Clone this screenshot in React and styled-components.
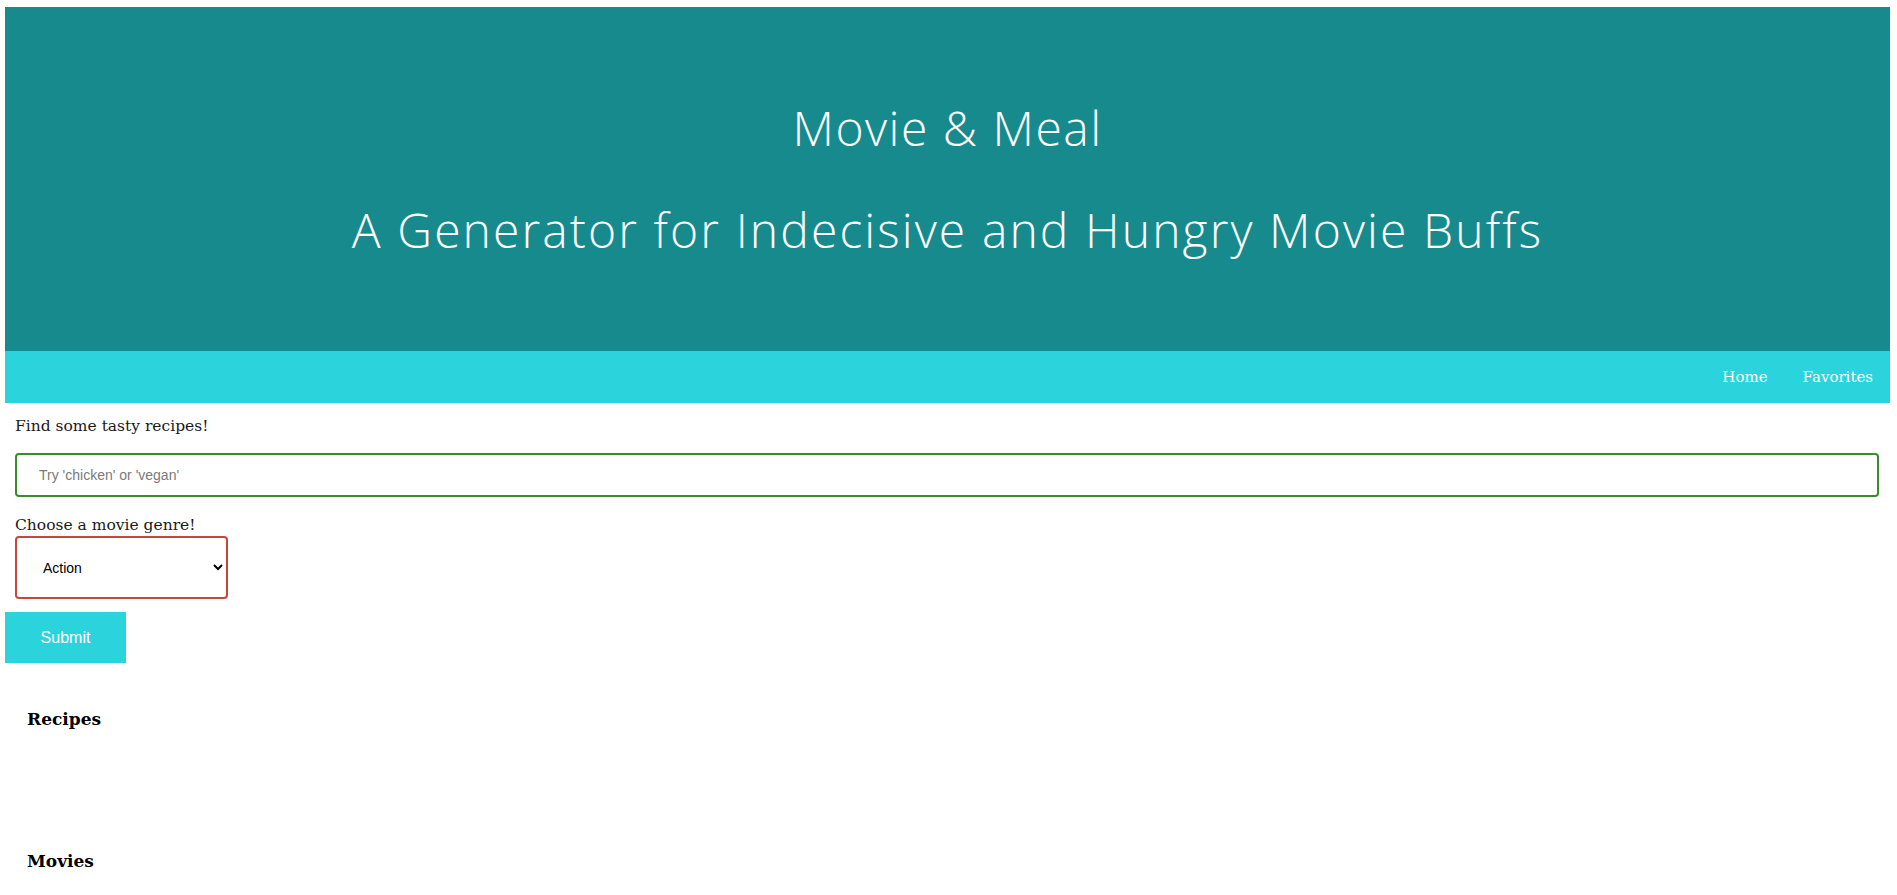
import React from 'react';
import styled, { createGlobalStyle } from 'styled-components';

const GlobalStyle = createGlobalStyle`
  body {
    margin: 0;
    background: #ffffff;
    font-family: 'DejaVu Serif', 'Liberation Serif', serif;
  }
`;

const Page = styled.div`
  padding: 7px 7px 0 5px;
`;

const Hero = styled.header`
  height: 344px;
  background: #178a8e;
  color: #ffffff;
  display: flex;
  flex-direction: column;
  align-items: center;
  justify-content: center;
  gap: 44px;
  font-family: 'Open Sans', sans-serif;
  font-weight: 300;
`;

const HeroLine = styled.h1`
  margin: 0;
  font-size: 48px;
  font-weight: 300;
  line-height: 1.2;
  letter-spacing: ${props => props.$spacing || '0'};
`;

const NavBar = styled.nav`
  height: 52px;
  background: #2bd4dc;
  display: flex;
  justify-content: flex-end;
  align-items: center;
  gap: 35px;
  padding-right: 17px;
`;

const NavLink = styled.a`
  color: #ffffff;
  text-decoration: none;
  font-size: 15px;
  cursor: pointer;
`;

const SearchForm = styled.form`
  display: flex;
  flex-direction: column;
  align-items: flex-start;
`;

const Field = styled.div`
  align-self: stretch;
  padding: 0 11px 0 10px;
  display: flex;
  flex-direction: column;
  align-items: flex-start;
`;

const Label = styled.label`
  font-size: 15.5px;
  color: #1a1a1a;
  margin-top: ${props => props.$top || '0'};
  line-height: 18px;
`;

const TextInput = styled.input`
  box-sizing: border-box;
  align-self: stretch;
  height: 44px;
  margin-top: 18px;
  border: 2px solid #3b8a2c;
  border-radius: 4px;
  padding: 0 22px;
  font-family: 'Liberation Sans', Arial, sans-serif;
  font-size: 14px;
  outline: none;
  &::placeholder {
    color: #7a7a7a;
  }
`;

const Select = styled.select`
  box-sizing: border-box;
  width: 213px;
  height: 63px;
  border: 2px solid #c8463c;
  border-radius: 4px;
  padding: 0 8px 0 22px;
  font-family: 'Liberation Sans', Arial, sans-serif;
  font-size: 14px;
  color: #000000;
  background: #ffffff;
  margin-top: 2px;
`;

const SubmitButton = styled.button`
  width: 121px;
  height: 51px;
  margin-top: 13px;
  border: none;
  background: #2bd4dc;
  color: #ffffff;
  font-family: 'Liberation Sans', Arial, sans-serif;
  font-size: 16px;
  cursor: pointer;
`;

const Results = styled.section`
  padding: 0 22px;
`;

const ResultHeading = styled.h3`
  margin: ${props => props.$top} 0 0;
  font-size: 17px;
  font-weight: 600;
  line-height: 22px;
  color: #000000;
`;

const ResultList = styled.div`
  min-height: ${props => props.$height || '0'};
`;

const genres = ['Action', 'Adventure', 'Animation', 'Comedy', 'Crime', 'Drama', 'Horror', 'Romance'];

export default function App() {
  return (
    <Page>
      <GlobalStyle />
      <Hero>
        <HeroLine $spacing="1.5px">Movie &amp; Meal</HeroLine>
        <HeroLine $spacing="2.1px">A Generator for Indecisive and Hungry Movie Buffs</HeroLine>
      </Hero>
      <NavBar>
        <NavLink>Home</NavLink>
        <NavLink>Favorites</NavLink>
      </NavBar>
      <SearchForm onSubmit={e => e.preventDefault()}>
        <Field>
          <Label $top="14px">Find some tasty recipes!</Label>
          <TextInput type="text" placeholder="Try 'chicken' or 'vegan'" />
          <Label $top="19px">Choose a movie genre!</Label>
          <Select defaultValue="Action">
            {genres.map(g => (
              <option key={g}>{g}</option>
            ))}
          </Select>
        </Field>
        <SubmitButton type="submit">Submit</SubmitButton>
      </SearchForm>
      <Results>
        <ResultHeading $top="45px">Recipes</ResultHeading>
        <ResultList $height="120px" />
        <ResultHeading $top="0">Movies</ResultHeading>
        <ResultList />
      </Results>
    </Page>
  );
}
